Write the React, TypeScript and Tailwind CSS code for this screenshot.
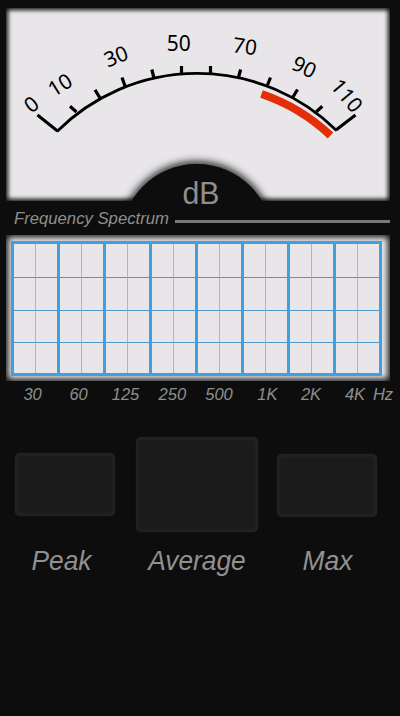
import React from 'react';

const ticks = [
  [70, 106.3, 76.5, 112], [95, 89.8, 100, 98], [122, 77.5, 125, 86], [151.8, 69.5, 153.8, 77.5],
  [181.5, 66, 181.5, 74], [210.5, 66, 210.5, 74], [240.6, 69.5, 238.6, 77], [270.5, 77.5, 267.5, 85],
  [297.5, 89.5, 293, 97], [322.3, 106.2, 316.3, 111.7],
];

const numbers: [string, number, number, number][] = [
  ['0', 31.3, 104.3, -38], ['10', 60, 84.8, -32], ['30', 116, 56.3, -22], ['50', 178.7, 43.7, 0],
  ['70', 245, 46.3, 8], ['90', 304.3, 67, 26], ['110', 346.8, 95.5, 50],
];

const bands: [string, number][] = [
  ['30', 32.6], ['60', 78.6], ['125', 125.5], ['250', 172.3], ['500', 219], ['1K', 267.3], ['2K', 311], ['4K', 355], ['Hz', 383],
];

function Gauge() {
  return (
    <svg className="block h-[210px] w-[400px]" viewBox="0 0 400 210">
      <defs>
        <filter id="soft" x="-10%" y="-10%" width="120%" height="120%">
          <feGaussianBlur stdDeviation="2" />
        </filter>
        <filter id="domeSoft" x="-20%" y="-20%" width="140%" height="140%">
          <feGaussianBlur stdDeviation="4" />
        </filter>
        <clipPath id="panel"><rect x="6" y="8" width="384" height="193" /></clipPath>
      </defs>
      <g clipPath="url(#panel)">
        <rect x="5" y="8" width="386" height="194" fill="#e8e6e9" />
        <rect x="4" y="6" width="388" height="197" fill="none" stroke="#0d0d0d" strokeWidth="8" filter="url(#soft)" />
        <circle cx="196.8" cy="239" r="77" fill="#0d0d0d" filter="url(#domeSoft)" />
        <circle cx="196.8" cy="240" r="76" fill="#0d0d0d" />
      </g>
      <path d="M57 131A198.5 198.5 0 0 1 336.5 130" fill="none" stroke="#000" strokeWidth="2.8" transform="translate(0 .5)" />
      <path d="M37.5 115L57.5 131M355.5 115L336 130" stroke="#000" strokeWidth="3" />
      {ticks.map(([a, b, c, d]) => (
        <line key={a} x1={a} y1={b} x2={c} y2={d} stroke="#000" strokeWidth="3.2" />
      ))}
      <path d="M261.5 94A189 189 0 0 1 330.5 135.5" fill="none" stroke="#e42e0a" strokeWidth="8" />
      {numbers.map(([t, x, y, r]) => (
        <text key={t} transform={`translate(${x} ${y}) rotate(${r})`} y="7.5" textAnchor="middle" fontSize="21" className="font-['Noto_Sans',sans-serif]">{t}</text>
      ))}
      <text x="201" y="204" textAnchor="middle" fontSize="31" textLength="37" lengthAdjust="spacingAndGlyphs" fill="#8f8f8f">dB</text>
    </svg>
  );
}

function Meter({ label, box, x, width }: { label: string; box: string; x: number; width: number }) {
  return (
    <div className="flex flex-col items-center">
      <div className="flex h-[98px] items-center justify-center">
        <div className={`${box} rounded-[5px] bg-[#1b1b1b] shadow-[inset_0_0_3px_3px_#232323,0_0_2px_#1b1b1b]`} />
      </div>
      <svg className="mt-1 h-[50px] w-[110px] overflow-visible" viewBox="0 0 110 50">
        <text x={x} y="33" textAnchor="middle" fontSize="28.5" fontStyle="italic" fill="#919191" textLength={width} lengthAdjust="spacingAndGlyphs">{label}</text>
      </svg>
    </div>
  );
}

export default function App() {
  return (
    <main className="flex h-[716px] w-[400px] flex-col overflow-hidden bg-[#0d0d0d] font-['Liberation_Sans',Arial,sans-serif]">
      <Gauge />
      <div className="flex h-[25px] items-start pl-[14px]">
        <span className="w-[161px] text-[16.7px] leading-[17px] whitespace-nowrap text-[#8f8f8f] italic">Frequency Spectrum</span>
        <div className="mt-[10px] h-[3px] w-[215px] bg-[#7c797b]" />
      </div>
      <section className="ml-[6px] h-[146px] w-[384px] bg-[#e8e6e9] pt-[6px] pl-[5px] shadow-[inset_0_0_6px_2px_#0d0d0d]">
        <div className="grid h-[135px] w-[371px] grid-cols-[repeat(8,46px)] border-[3px] border-r-0 border-[#409fde] bg-[#e8e6e9]">
          {Array.from({ length: 8 }, (_, i) => (
            <div key={i} className="grid grid-cols-[22px_21px] grid-rows-[34px_33px_32px_30px] border-r-[3px] border-[#409fde]">
              {Array.from({ length: 8 }, (_, j) => (
                <div key={j} className={`${j % 2 ? '' : 'border-r border-r-[#b5b3b5]'} ${j < 6 ? 'border-b border-b-[#5299c9]' : ''}`} />
              ))}
            </div>
          ))}
        </div>
      </section>
      <svg className="block h-[30px] w-[400px] shrink-0" viewBox="0 381 400 30">
        {bands.map(([t, x]) => (
          <text key={t} x={x} y="400" textAnchor="middle" fontSize="16.5" fontStyle="italic" fill="#8f8f8f">{t}</text>
        ))}
      </svg>
      <section className="mt-[24px] grid grid-cols-[100px_122px_100px] gap-x-[20px] pl-[15px]">
        <Meter label="Peak" box="h-[63px] w-[100px]" x={51.5} width={60} />
        <Meter label="Average" box="mt-px ml-[2px] h-[95px] w-[122px]" x={56} width={97.5} />
        <Meter label="Max" box="mt-[2px] h-[63px] w-[100px]" x={55.5} width={50} />
      </section>
    </main>
  );
}
